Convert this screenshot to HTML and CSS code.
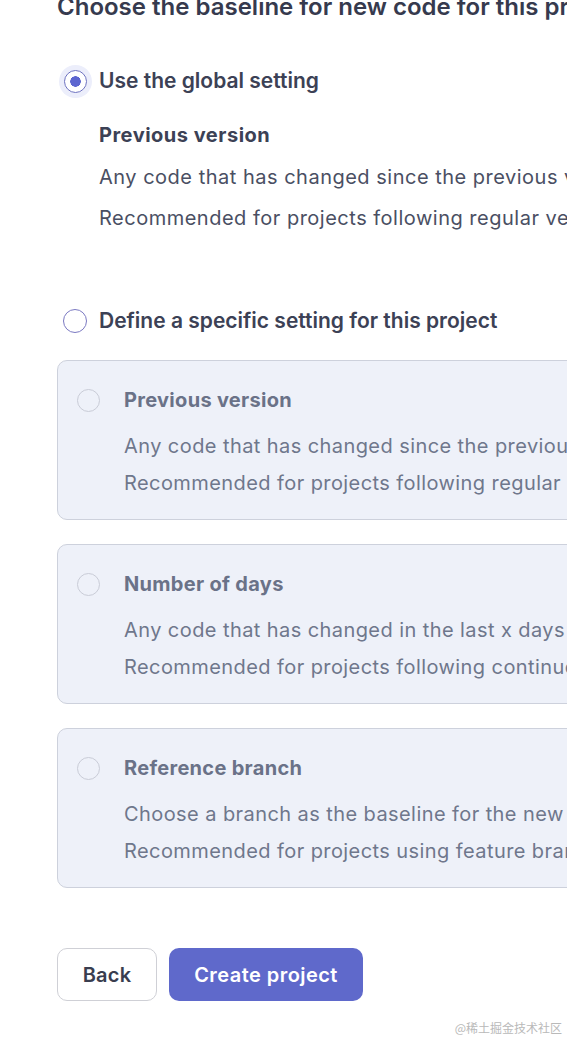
FILE: index.html
```html
<!DOCTYPE html>
<html lang="en">
<head>
<meta charset="utf-8">
<title>New code baseline</title>
<link rel="stylesheet" href="styles.css">
</head>
<body>
<div class="page">
  <h1 class="title">Choose the baseline for new code for this project</h1>

  <div class="option option-global">
    <span class="radio-wrap"><span class="radio radio-checked"></span></span>
    <span class="option-label">Use the global setting</span>
  </div>
  <div class="global-detail">
    <div class="detail-title">Previous version</div>
    <p class="detail-line first">Any code that has changed since the previous version is considered new code.</p>
    <p class="detail-line">Recommended for projects following regular versions or releases.</p>
  </div>

  <div class="option option-specific">
    <span class="radio-wrap"><span class="radio radio-empty"></span></span>
    <span class="option-label">Define a specific setting for this project</span>
  </div>

  <div class="cards">
    <div class="card">
      <span class="card-radio"></span>
      <div class="card-body">
        <div class="card-title">Previous version</div>
        <p class="card-line first">Any code that has changed since the previous version is considered new code.</p>
        <p class="card-line">Recommended for projects following regular versions or releases.</p>
      </div>
    </div>
    <div class="card">
      <span class="card-radio"></span>
      <div class="card-body">
        <div class="card-title">Number of days</div>
        <p class="card-line first">Any code that has changed in the last x days is considered new code.</p>
        <p class="card-line">Recommended for projects following continuous delivery.</p>
      </div>
    </div>
    <div class="card">
      <span class="card-radio"></span>
      <div class="card-body">
        <div class="card-title">Reference branch</div>
        <p class="card-line first">Choose a branch as the baseline for the new code.</p>
        <p class="card-line">Recommended for projects using feature branches.</p>
      </div>
    </div>
  </div>

  <div class="actions">
    <button class="btn btn-back" type="button">Back</button>
    <button class="btn btn-primary" type="button">Create project</button>
  </div>
</div>
<div class="watermark">@稀土掘金技术社区</div>
</body>
</html>
```

FILE: styles.css
```css
html, body {
  margin: 0;
  padding: 0;
  background: #ffffff;
  overflow: hidden;
}

body {
  font-family: Inter, "Noto Sans", "Noto Sans CJK SC", sans-serif;
  color: #3e4357;
  width: 567px;
  height: 1040px;
  position: relative;
}

.page {
  padding-left: 57px;
  width: 1000px;
}

.title {
  margin: -9px 0 0 0;
  font-size: 24px;
  line-height: 32px;
  font-weight: 600;
  color: #363a4e;
  white-space: nowrap;
}

.option {
  display: flex;
  align-items: center;
  height: 32px;
}

.option-global {
  margin-top: 42px;
}

.option-specific {
  margin-top: 73px;
}

.radio-wrap {
  width: 36px;
  height: 32px;
  display: flex;
  align-items: center;
  justify-content: center;
  margin-right: 6px;
  flex-shrink: 0;
}

.radio {
  box-sizing: border-box;
  border-radius: 50%;
  display: block;
}

.radio-checked {
  width: 23px;
  height: 23px;
  border: 1px solid #6a6fc0;
  background: radial-gradient(circle, #5d66d0 0 5px, #ffffff 5.5px);
  box-shadow: 0 0 0 5px #eceefb;
}

.radio-empty {
  width: 24px;
  height: 24px;
  border: 1.5px solid #7b79c2;
  background: #ffffff;
}

.option-label {
  font-size: 21px;
  line-height: 32px;
  font-weight: 600;
  color: #3c4155;
  white-space: nowrap;
}

.global-detail {
  padding-left: 42px;
  margin-top: 24px;
}

.detail-title {
  font-size: 20px;
  line-height: 28px;
  font-weight: 700;
  letter-spacing: 0.5px;
  color: #3c4155;
  white-space: nowrap;
}

.detail-line {
  margin: 13px 0 0 0;
  font-size: 20px;
  line-height: 28px;
  font-weight: 400;
  letter-spacing: 0.5px;
  color: #4a4f63;
  white-space: nowrap;
}

.detail-line.first {
  margin-top: 14px;
}

.cards {
  margin-top: 23px;
  display: flex;
  flex-direction: column;
  gap: 24px;
}

.card {
  box-sizing: border-box;
  width: 900px;
  height: 160px;
  border: 1px solid #cdd1dc;
  border-radius: 10px;
  background: #eef1f9;
  padding: 25px 0 0 19px;
  display: flex;
  align-items: flex-start;
}

.card-radio {
  box-sizing: border-box;
  width: 23px;
  height: 23px;
  border-radius: 50%;
  border: 1px solid #c9ccd7;
  margin-top: 2.5px;
  margin-right: 24px;
  flex-shrink: 0;
}

.card-title {
  font-size: 20px;
  line-height: 28px;
  font-weight: 700;
  letter-spacing: 0.3px;
  color: #6a7288;
  white-space: nowrap;
}

.card-line {
  margin: 9px 0 0 0;
  font-size: 20px;
  line-height: 28px;
  font-weight: 400;
  letter-spacing: 0.42px;
  color: #6f778c;
  white-space: nowrap;
}

.card-line.first {
  margin-top: 18px;
}

.actions {
  margin-top: 60px;
  display: flex;
  gap: 12px;
}

.btn {
  font-family: Inter, "Noto Sans", sans-serif;
  font-size: 20px;
  font-weight: 600;
  height: 53px;
  border-radius: 10px;
  box-sizing: border-box;
  cursor: pointer;
  padding: 0;
}

.btn-back {
  width: 100px;
  border: 1px solid #cfd0d6;
  background: #ffffff;
  color: #393d4f;
  letter-spacing: 0.2px;
}

.btn-primary {
  width: 194px;
  border: none;
  background: #5f69cb;
  color: #ffffff;
  letter-spacing: 0.45px;
}

.watermark {
  position: absolute;
  right: 5px;
  bottom: 4px;
  font-family: "Noto Sans CJK SC", sans-serif;
  font-size: 12px;
  color: #b9b9b9;
  white-space: nowrap;
}
```
